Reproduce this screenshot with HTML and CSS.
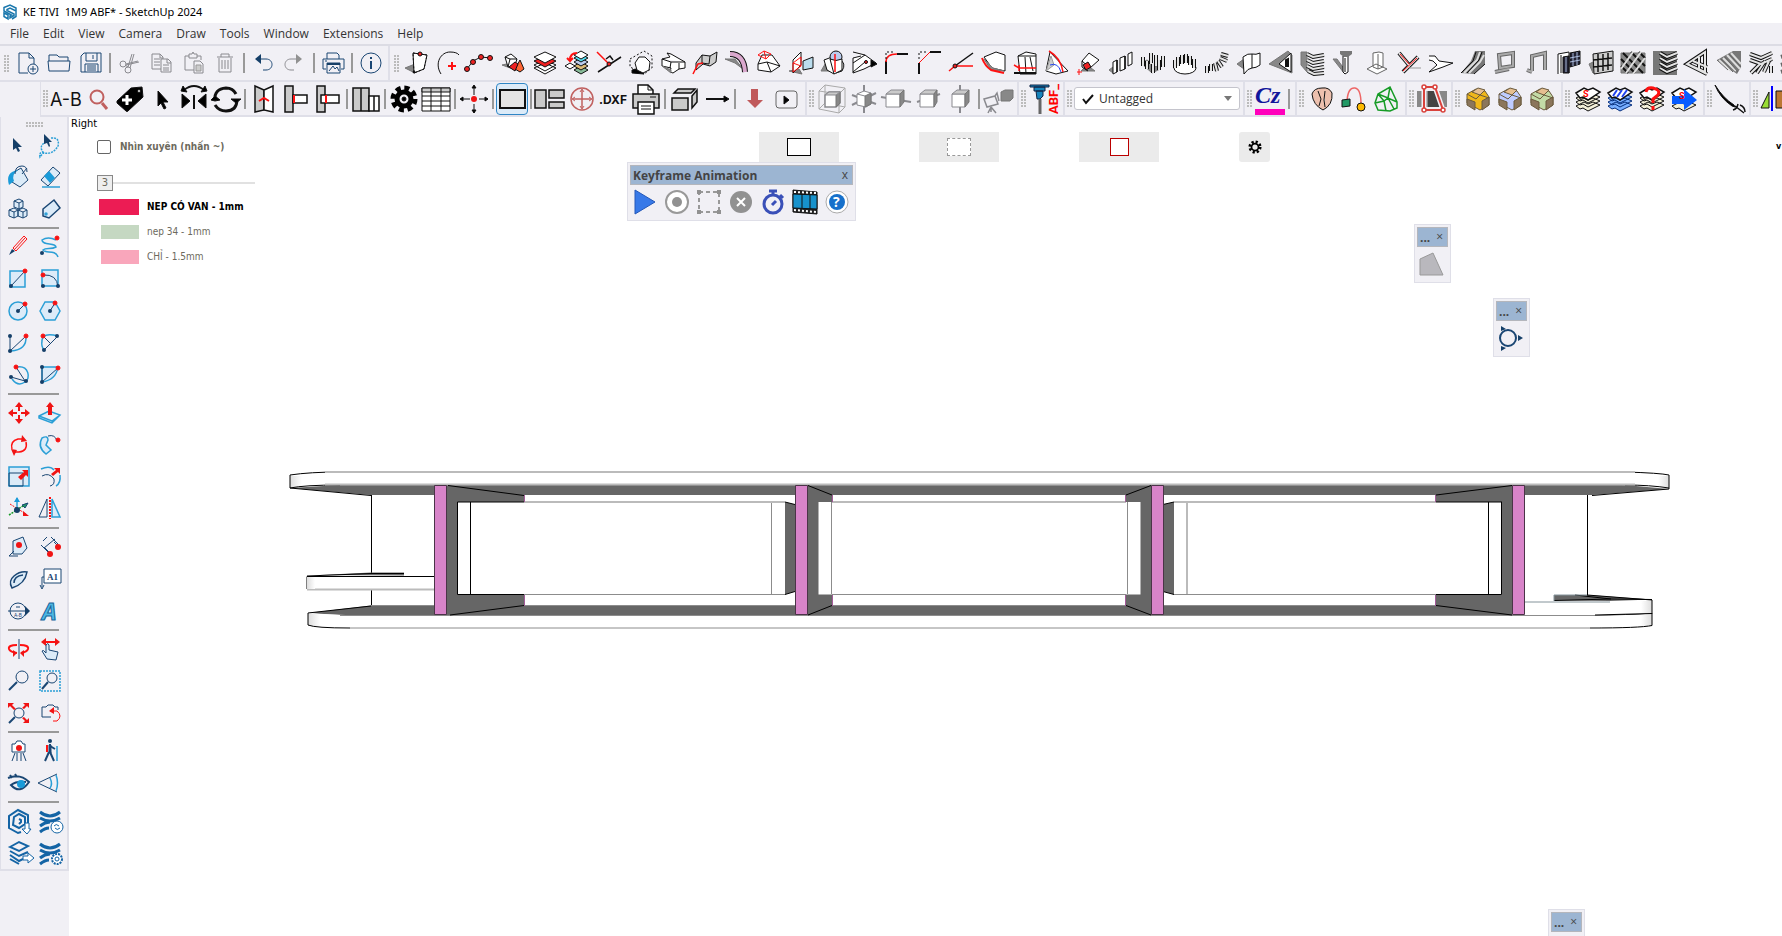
FILE: index.html
```html
<!DOCTYPE html>
<html lang="vi">
<head>
<meta charset="utf-8">
<title>KE TIVI 1M9 ABF* - SketchUp 2024</title>
<link rel="stylesheet" href="styles.css">
</head>
<body>
<header class="titlebar">
<svg class="logo" viewBox="0 0 16 16"><path d="M2 3.500 8 1l6 3v3L8 4 5 5.500v1L12 10v1.500L8 14v-2l1.500-1L2 7zM2 9l4 2v4l-4-2.500zM10 15l4-2.500V5"/></svg>
<h1>KE TIVI&nbsp; 1M9 ABF* - SketchUp 2024</h1>
</header>
<nav class="menu">
<button>File</button><button>Edit</button><button>View</button><button>Camera</button><button>Draw</button><button>Tools</button><button>Window</button><button>Extensions</button><button>Help</button>
</nav>

<div class="bar first">
<div class="group navy">
<i class="grip"></i>
<button aria-label="New"><svg viewBox="0 0 32 32"><path d="M17 26H8V6h10l5 5v6M18 6v5h5"/><circle cx="22" cy="22" r="5"/><path d="M22 19v6M19 22h6"/></svg></button>
<button aria-label="Open"><svg viewBox="0 0 32 32"><path d="M6 14V8h8l2 2h9v4M5 14h22l-1 10H6z"/></svg></button>
<button aria-label="Save"><svg viewBox="0 0 32 32"><path d="M6 9l3-3h17v19H6zM11 6v8h11V6M18 8v4M10 25v-8h13v8M12 19h9M12 21h9M12 23h9"/></svg></button>
<i class="sep"></i>
<button aria-label="Cut"><svg class="gray" viewBox="0 0 32 32"><circle cx="10" cy="17" r="3"/><circle cx="15" cy="23" r="3"/><path d="M13 17l12-3M26 15l-13 3M15 20l4-13M21 7l-4 14M12 18l3 2"/></svg></button>
<button aria-label="Copy"><svg class="gray" viewBox="0 0 32 32"><path d="M16 22H7V7h8l3 3v2M15 7v4h3M9 12h6M9 15h6M9 18h6M16 12h7l3 3v10H16zM22 12v4h4M18 18h6M18 21h6M18 23h6"/></svg></button>
<button aria-label="Paste"><svg class="gray" viewBox="0 0 32 32"><path d="M17 23H8V9h4M20 9h4v4M12 7h3l1-2 1 2h3v4h-8zM17 14h6l3 3v9h-9z"/><path class="f-lg" d="M19 18h5v6h-5z"/></svg></button>
<button aria-label="Delete"><svg class="gray" viewBox="0 0 32 32"><path d="M8 10h16M12 10V7h8v3M10 11v14h12V11M13 13v9M16 13v9M19 13v9"/></svg></button>
<i class="sep"></i>
<button aria-label="Undo"><svg viewBox="0 0 32 32"><path d="M10 12h9c8 0 8 11 0 11h-3"/><path class="f-navy" d="M8 12l6-5v10z"/></svg></button>
<button aria-label="Redo"><svg class="gray" viewBox="0 0 32 32"><path d="M21 12h-9c-8 0-8 11 0 11h3"/><path class="f-gray" d="M23 12l-6-5v10z"/></svg></button>
<i class="sep"></i>
<button aria-label="Print"><svg viewBox="0 0 32 32"><path d="M10 12V6h10l2 2v4M9 22H6V12h21v10h-3M10 16v10h13V16zM8 14h2M12 24l4-5 2 3 2-2 2 4"/><path class="f-navy" d="M10 16h13v2H10z"/></svg></button>
<i class="sep"></i>
<button aria-label="Model info"><svg viewBox="0 0 32 32"><circle cx="16" cy="16" r="10"/><path class="w2" d="M16 14v8M16 10v2"/></svg></button>
</div>
<div class="group small">
<i class="grip"></i>
<button aria-label="Extrude"><svg viewBox="0 0 24 24"><path class="f-g" d="M0 17l10-4v9z"/><path class="f-w" d="M8 2l14 2-3 14-10 4z"/><path class="dash" d="M8 2l14 2-3 14-10 4z"/><circle class="f-r" cx="15" cy="3" r="2"/><circle class="f-k" cx="9" cy="21" r="1"/></svg></button>
<button aria-label="Arc point"><svg viewBox="0 0 24 24"><path d="M4 23C-3 12 4 1 13 1q7 0 9 3"/><path class="r w2" d="M15 11v8M11 15h8"/></svg></button>
<button aria-label="Polyline"><svg viewBox="0 0 24 24"><path d="M-2 18l6-8 8-4 10 1"/><circle class="f-r" cx="-2" cy="18" r="2.500"/><circle class="f-r" cx="4" cy="11" r="2.500"/><circle class="f-r" cx="12" cy="6" r="2.500"/><circle class="f-r" cx="21" cy="7" r="2.500"/></svg></button>
<button aria-label="Solid"><svg viewBox="0 0 24 24"><path class="f-g" d="M1 14l9-2 2 6z"/><path class="f-w" d="M4 6l6-3 6 5-2 6-7 2zM4 6l5 2 7 0M9 8l-2 8"/><path class="f-o" d="M14 18l5-9 4 9-4 3z"/><path class="f-r" d="M8 16l6-5 3 2-3 7z"/></svg></button>
<button aria-label="Layers"><svg viewBox="0 0 24 24"><path class="f-w" d="M1 17l11-5 11 5-11 6zM1 14l11-5 11 5-11 6z"/><path class="f-r" d="M1 10l11-5 11 5-11 6z"/><path class="f-w" d="M1 6l11-5 11 5-11 6z"/></svg></button>
<button aria-label="Swap layers"><svg viewBox="0 0 24 24"><path class="f-gr" d="M9 19l7-4 7 4-7 4z"/><path class="f-y" d="M9 15l7-4 7 4-7 4z"/><path class="f-p" d="M9 11l7-4 7 4-7 4z"/><path class="f-c" d="M9 7l7-4 7 4-7 4z"/><path class="f-w" d="M9 4l7-4 7 4-7 4zM0 15l5-3 5 3-5 3z"/><path class="r w2" d="M12 2Q5 2 5 9M2 7l3 3 3-3"/></svg></button>
<button aria-label="Intersect"><svg viewBox="0 0 24 24"><path class="w15" d="M1 21L24 6M9 8l4-3 3 4"/><path class="r w15" d="M0 1l12 12"/><circle class="f-r" cx="12" cy="13" r="2"/></svg></button>
<button aria-label="Hull"><svg viewBox="0 0 24 24"><path class="f-k" d="M3 19l8-2 4 6-12-1z"/><path class="dash" d="M1 8L15 0l8 5v12l-8 6L1 16z"/><path class="f-w" d="M6 12l4-6h6l5 5-1 8-6 3-6-3z"/></svg></button>
<button aria-label="Push face"><svg viewBox="0 0 24 24"><path class="f-w" d="M1 8l8-2-3-4 4 1 14 8v6l-6 1-6 4-3-1 1-4-9-2zM1 8l9 3 14 0M10 11l-1 6M18 12v6"/><path class="f-g" d="M1 15l9 4v3z"/></svg></button>
<button aria-label="Warp"><svg viewBox="0 0 24 24"><path class="f-lg k" d="M3 12l6-8 8 1 7-4-1 10-6 4-7-2-7 6z"/><path d="M9 4v8l7 1 1-8"/><path class="r w15" d="M0 23l5-10 5-1"/></svg></button>
<button aria-label="Pipe"><svg viewBox="0 0 24 24"><path class="f-g" d="M0 8h10l8 10-8-6z"/><path class="pipe k" d="M5 3q14 0 15 18"/><path class="pipe p2" d="M5 3q14 0 15 18"/></svg></button>
<button aria-label="Dome"><svg viewBox="0 0 24 24"><path class="f-w" d="M1 13l4-9h10l8 11-9 6-13-2zM1 13l9-2 13 4M10 11l4 10"/><path class="r" d="M1 4l6-4 7 3-5 5zM7 0l2 8"/></svg></button>
<button aria-label="Section"><svg viewBox="0 0 24 24"><path class="f-g" d="M0 20l10-2 3 5z"/><path class="f-w" d="M4 9l8-8v13l-8 8z"/><path class="f-cl" d="M14 10l10-4v11l-10 2z"/><path class="r" d="M4 12l8-6v9l-8 6zM4 12l8 3"/></svg></button>
<button aria-label="Lens"><svg viewBox="0 0 24 24"><path class="f-g" d="M0 20L7 8l6 12z"/><path class="f-w" d="M3 9l8-3 6 9-4 8-7-4zM18 8q8 4 3 12l-6 2"/><circle class="f-p" cx="15" cy="6" r="6"/><path class="f-w" d="M9 8q6 3 12 0v11l-8 4z"/><path class="r w15" d="M14 3v18"/></svg></button>
<button aria-label="Cone"><svg viewBox="0 0 24 24"><path class="f-w" d="M0 1l12 3 11 8-12 6-11 4V7l8-2"/><path d="M0 12l12-8M0 21l12-10"/><path class="f-k" d="M18 9l6 4-6 3z"/><circle class="f-r" cx="13" cy="11" r="1.500"/></svg></button>
<button aria-label="Fillet"><svg viewBox="0 0 24 24"><path class="w2" d="M1 23V10M12 3h11"/><path class="r w15" d="M1 11q0-8 11-8"/><path class="dash" d="M1 8V1h8"/></svg></button>
<button aria-label="Chamfer"><svg viewBox="0 0 24 24"><path class="w2" d="M2 23V12M13 1h11"/><path class="r" d="M2 12L13 1"/><path class="dash" d="M2 8V1h7"/></svg></button>
<button aria-label="Angle"><svg viewBox="0 0 24 24"><path class="w15" d="M6 15L24 2"/><path class="r w15" d="M0 20l6-5 18 0"/><circle class="f-r" cx="6" cy="15" r="2"/></svg></button>
<button aria-label="Sweep"><svg viewBox="0 0 24 24"><path class="f-w" d="M3 6l12-5 9 3v16l-13-3z"/><path class="f-g" d="M3 8l9 9 11 3-13-1z"/><path class="r w2" d="M1 7q3 8 9 12l13 3"/></svg></button>
<button aria-label="Box wrap"><svg viewBox="0 0 24 24"><path class="f-w" d="M5 5l8-4 10 2v20H7zM5 5h18M12 6l1 17M17 6l3 14"/><path class="r w15" d="M1 14l5 3h17M6 14v6"/><path class="k w2" d="M1 22h22"/></svg></button>
<button aria-label="Fold"><svg viewBox="0 0 24 24"><path class="f-w" d="M1 20L5 1l18 19-12 3z"/><path class="f-lg" d="M1 20L6 5l3 9z"/><path class="r w15" d="M4 0q12 7 14 21"/><path class="b" d="M5 14q8-3 11 7"/></svg></button>
<button aria-label="Place"><svg viewBox="0 0 24 24"><path class="f-g" d="M4 20h14l-8-6z"/><path class="f-w" d="M5 10l7-8 10 7-9 8z"/><path d="M5 10v6l6 4"/><path class="f-r" d="M6 14l5-3 3 5-5 3z"/><path class="r" d="M2 18v6M0 21h5"/></svg></button>
<button aria-label="Array along"><svg viewBox="0 0 24 24"><path class="f-g" d="M0 19l4-3v6z"/><path class="f-w" d="M4 11l4-2v12l-4 2zM11 7l5-2v13l-5 2zM19 3l4-2v12l-4 2z"/><path class="k w15" d="M8 9v12M16 5v13"/></svg></button>
<button aria-label="Array grid"><svg viewBox="0 0 24 24"><path class="f-g" d="M0 12l6-3 13 9-8 4z"/><path class="posts" d="M2 6v9M6 10v8M10 2v11M12 12v10M15 4v11M18 9v10M22 5v11"/><path class="posts in" d="M2 6v9M6 10v8M10 2v11M12 12v10M15 4v11M18 9v10M22 5v11"/></svg></button>
<button aria-label="Array polar"><svg viewBox="0 0 24 24"><ellipse class="f-w" cx="12" cy="17" rx="11" ry="6"/><path class="posts" d="M2 9v8M5 6v9M9 4v9M13 3v9M17 5v9M21 8v9"/><path class="posts in" d="M2 9v8M5 6v9M9 4v9M13 3v9M17 5v9M21 8v9"/></svg></button>
<button aria-label="Array curve"><svg viewBox="0 0 24 24"><path class="posts" d="M2 15v7M6 13v7M10 12l2 8M13 10l4 6M15 7l7 3M16 3l7 2"/><path class="posts in" d="M2 15v7M6 13v7M10 12l2 8M13 10l4 6M15 7l7 3M16 3l7 2"/></svg></button>
<button aria-label="Curved panel"><svg viewBox="0 0 24 24"><path class="f-g" d="M0 13l7-5v10z"/><path class="f-w" d="M6 6q5-4 9-3t8-1v12q-4 3-8 3t-8 6zM15 3v14"/></svg></button>
<button aria-label="Slot panel"><svg viewBox="0 0 24 24"><path class="f-g" d="M0 13L19 0l4 4v18z"/><path class="f-w" d="M10 13L22 2v19z"/><path class="k w2" d="M17 9v6h2V8z"/></svg></button>
<button aria-label="Shelves"><svg viewBox="0 0 24 24"><path class="f-g" d="M0 1h6v20L0 14z"/><path class="louv" d="M6 3l6 3 11-2M6 9l6 3 11-2M6 15l6 3 11-2M7 20l6 3 10-1"/><path class="louv in" d="M6 3l6 3 11-2M6 9l6 3 11-2M6 15l6 3 11-2M7 20l6 3 10-1"/></svg></button>
<button aria-label="Bolt"><svg viewBox="0 0 24 24"><path class="f-g" d="M0 8l4 0 8 11-1 3z"/><path class="f-w" d="M10 5h5v16l-3 2-2-2zM12 7v14"/><path class="f-dg" d="M7 0h12v3l-4 3h-4L7 3z"/></svg></button>
<button aria-label="Base"><svg viewBox="0 0 24 24" class="mid"><path class="f-w" d="M2 18l9-5 11 5-10 5zM8 2l6-1 4 1v14l-5 2-5-2zM13 3v15"/></svg></button>
<button aria-label="Joint"><svg viewBox="0 0 24 24"><path class="posts" d="M2 2l10 12M21 6L6 21"/><path class="posts in" d="M2 2l10 12M21 6L6 21"/><path class="r" d="M3 3l9 10M20 7L6 20"/><path class="gr1" d="M12 17h12"/></svg></button>
<button aria-label="Scarf"><svg viewBox="0 0 24 24"><path class="f-w" d="M0 5h6l4 5 14 2-10 4-14 5 8-7-4-4-4-1"/></svg></button>
<button aria-label="Rail"><svg viewBox="0 0 24 24"><path class="f-dg" d="M0 22L10 10 14 0h10v13L13 23z"/><path class="lt" d="M3 22L16 9l3-8M8 22l11-11 4-7"/><path class="k" d="M0 22L12 10l3-9M6 22L18 9l3-8M13 23l11-10"/></svg></button>
<button aria-label="Frame"><svg viewBox="0 0 24 24"><path class="gw" d="M6 4l14-2v13L7 17zM2 21l14-3"/><path class="gw in" d="M6 4l14-2v13L7 17zM2 21l14-3"/></svg></button>
<button aria-label="Arch"><svg viewBox="0 0 24 24"><path class="gw" d="M7 20V5l13-3v17M2 19l5 2"/><path class="gw in" d="M7 20V5l13-3v17M2 19l5 2"/></svg></button>
<button aria-label="Window wall"><svg viewBox="0 0 24 24"><path class="f-w" d="M1 23V3l11-2v21"/><path d="M4 4v18"/><path class="f-n" d="M6 6l6-1v17H6zM13 2l10-2v13l-10 3z"/><path class="lt1" d="M16 2v13M20 1v13M13 7l10-2M13 11l10-2M9 6v15"/></svg></button>
<button aria-label="Grid"><svg viewBox="0 0 24 24"><path class="f-g" d="M0 13l4-2v11z"/><path class="f-lg k" d="M4 3l20-3v20L5 23z"/><path class="k w15" d="M9 3v18M14 3v17M19 2v17M4 9l19-2M4 16l19-2"/></svg></button>
<button aria-label="Mesh"><svg viewBox="0 0 24 24"><path class="f-g" d="M0 2h24v20H0z"/><path class="k w2" d="M0 8l14 14M2 2l20 20M10 1l14 14M0 15l7 7M18 1l6 6"/><path class="lt" d="M0 18L12 1M5 22L20 1M12 23L24 7"/></svg></button>
<button aria-label="Louvers"><svg viewBox="0 0 24 24"><path class="f-dg" d="M0 0h24v24H0z"/><path class="louv" d="M7 2l7 4 10-4M7 7l7 4 10-4M7 12l7 4 10-4M7 17l7 4 10-4"/><path class="louv in" d="M7 2l7 4 10-4M7 7l7 4 10-4M7 12l7 4 10-4M7 17l7 4 10-4"/></svg></button>
<button aria-label="Truss"><svg viewBox="0 0 24 24"><path class="posts" d="M2 13L20 1v20zM8 10l14 6M14 6v12M2 13l20 10"/><path class="posts in" d="M2 13L20 1v20zM8 10l14 6M14 6v12M2 13l20 10"/></svg></button>
<button aria-label="Corrugated"><svg viewBox="0 0 24 24"><path class="f-dg" d="M0 9L16 0h8v16l-4 7z"/><path class="lt" d="M2 9l12 11M6 7l13 13M10 4l13 14M14 2l10 11"/><path class="mid" d="M0 9l11 10M4 8l12 13M8 6l13 15M12 3l12 13"/></svg></button>
<button aria-label="Herringbone"><svg viewBox="0 0 24 24"><path class="posts" d="M1 3l11 4L23 2M1 9l11 4L23 8M2 22l9-9M8 22l8-12M15 21l5-11M22 15v7"/><path class="posts in" d="M1 3l11 4L23 2M1 9l11 4L23 8M2 22l9-9M8 22l8-12M15 21l5-11M22 15v7"/></svg></button>
<button aria-label="More"><svg viewBox="0 0 24 24"><path class="gw" d="M0 6l12-4M0 14l12-4M0 21l12-4"/></svg></button>
</div>
</div>

<div class="bar second">
<div class="group">
<i class="grip"></i>
<button aria-label="A to B"><svg viewBox="0 0 32 32"><text class="ab" x="0" y="23">A-B</text></svg></button>
<button aria-label="Search"><svg viewBox="0 0 32 32"><path class="rose" d="M20 20l5 6"/><circle class="rose t" cx="15" cy="14" r="6.500"/></svg></button>
<button aria-label="Add tag"><svg viewBox="0 0 32 32"><path class="f-k" d="M3 18L17 5l11-1 1 10-15 14q-1 1-2 0l-9-8z"/><circle class="f-w" cx="25" cy="8" r="1.500"/><path class="wl" d="M13 12v10M8 17h10"/></svg></button>
<button aria-label="Select"><svg viewBox="0 0 32 32"><path class="f-k" d="M12 8v15l3-3 3 6 2-1-3-6h5z"/></svg></button>
<button aria-label="Mirror"><svg viewBox="0 0 32 32"><path class="w2" d="M6 7q10-8 20 0M16 12v14"/><path class="f-k" d="M3 8l6 1-4-6zM29 8l-6 1 4-6zM4 11v14l8-7zM28 11v14l-8-7z"/></svg></button>
<button aria-label="Rotate"><svg viewBox="0 0 32 32"><path class="w3" d="M5 17Q4 6 16 5q7 0 10 6M27 16q0 12-11 12-7 0-11-6"/><path class="f-k" d="M1 17l4-4 5 4-5 1zM21 16l5 4 5-4z"/></svg></button>
<i class="sep"></i>
<button aria-label="Book fold"><svg viewBox="0 0 32 32"><path class="f-l w15" d="M7 3l9 4v20l-9 2z"/><path class="f-w w15" d="M25 3l-9 4v20l9 2z"/><path class="r w2" d="M11 18l5-3 5 3"/></svg></button>
<button aria-label="Join tee"><svg viewBox="0 0 32 32"><path class="f-l w15" d="M5 3h8v26H5z"/><path class="f-w w15" d="M13 12h14v8H13z"/><path class="r w2" d="M14 12v8"/></svg></button>
<button aria-label="Dado"><svg viewBox="0 0 32 32"><path class="f-l w15" d="M5 3h8v26H5z"/><path class="f-w w15" d="M9 12h18v8H9z"/><path class="r w2" d="M14 12v8"/></svg></button>
<i class="sep"></i>
<button aria-label="Panels"><svg viewBox="0 0 32 32"><path class="f-l w15" d="M3 5h8v23H3zM11 5h8v23h-8z"/><path class="f-w w15" d="M19 13h5v15h-5zM24 13h5v15h-5z"/></svg></button>
<i class="sep"></i>
<button aria-label="Settings"><svg viewBox="0 0 32 32"><circle class="teeth" cx="16" cy="16" r="11"/><circle class="ring" cx="16" cy="16" r="7"/><circle class="f-k" cx="16" cy="16" r="2"/></svg></button>
<button aria-label="Table"><svg viewBox="0 0 32 32"><path class="f-w" d="M2 5h28v23H2z"/><path class="f-l" d="M2 5h28v4H2z"/><path d="M2 13h28M2 18h28M2 23h28M11 5v23M21 5v23"/></svg></button>
<i class="sep"></i>
<button aria-label="Move all"><svg viewBox="0 0 32 32"><path d="M16 3v9M16 21v9M3 16h9M21 16h9"/><circle class="f-r nos" cx="16" cy="16" r="3"/><path class="f-k" d="M14 5l2-3 2 3zM14 27l2 3 2-3zM5 14l-3 2 3 2zM27 14l3 2-3 2z"/></svg></button>
<i class="sep"></i>
<button class="on" aria-label="Rectangle"><svg viewBox="0 0 32 32"><path class="f-ll w2" d="M4 7h25v18H4z"/></svg></button>
<i class="sep"></i>
<button aria-label="Layout"><svg viewBox="0 0 32 32"><path class="f-l w15" d="M1 7h11v18H1zM15 7h15v8H15zM15 19h15v6H15z"/></svg></button>
<button aria-label="Center"><svg viewBox="0 0 32 32" class="rosy"><circle class="w15" cx="16" cy="16" r="11"/><path class="w15" d="M16 7v18M7 16h18"/><path d="M14 9l2-3 2 3M14 23l2 3 2-3M9 14l-3 2 3 2M23 14l3 2-3 2"/></svg></button>
<button aria-label="Export DXF"><svg viewBox="0 0 32 32"><text class="dxf" x="1" y="21">.DXF</text></svg></button>
<button aria-label="Print sheet"><svg viewBox="0 0 32 32"><path class="f-w w15" d="M8 11V2h10l5 5v4"/><path class="f-l w15" d="M3 11h26v14H3z"/><path class="f-w w15" d="M8 19h16v12H8z"/><path d="M11 23h10M11 26h10M18 2v5h5M20 14h6"/></svg></button>
<i class="sep"></i>
<button aria-label="Exploded box"><svg viewBox="0 0 32 32"><path class="f-l w15" d="M4 15h16v12H4zM10 6h17l-4 4H6zM24 13l5-6v12l-5 6z"/></svg></button>
<button aria-label="Direction"><svg viewBox="0 0 32 32"><path class="w2" d="M6 16h20"/><path class="f-k" d="M24 13l5 3-5 3z"/></svg></button>
<i class="sep"></i>
<button aria-label="Download"><svg viewBox="0 0 32 32"><path class="f-rose" d="M13 6h7v11h5l-8 8-8-8h4z"/></svg></button>
<button aria-label="Play"><svg viewBox="0 0 32 32"><rect x="6" y="8" width="21" height="17" rx="3" class="mid"/><path class="f-k" d="M14 13v8l5-4z"/></svg></button>
</div>
<div class="group gray">
<i class="grip"></i>
<button aria-label="Iso view"><svg viewBox="0 0 32 32"><path class="lg" d="M3 8l6-6 20 3v19l-6 6-20-4zM3 8l20 3 6-6M23 11v19M9 2v18l20 4M9 20l-6 6"/><path class="f-w w15" d="M9 12l4-3h11v11l-4 4H9z"/><path class="f-g" d="M20 12l4-3v11l-4 4z"/><path class="f-l" d="M9 12l4-3h11l-4 3z"/></svg></button>
<button aria-label="Top view"><svg viewBox="0 0 32 32"><path class="w2" d="M16 2v28M4 12l24 9M28 10L4 22"/><path class="f-w" d="M9 11l7-3 7 2v11l-5 3-9-2z"/><path class="f-g" d="M17 13l6-3v11l-6 3z"/><path d="M9 11l8 2"/></svg></button>
<button aria-label="Front view"><svg viewBox="0 0 32 32"><path class="w2" d="M1 14l30 5"/><path class="f-w" d="M6 11h14v13H6z"/><path class="f-l" d="M6 11l5-4h13l-4 4z"/><path class="f-g" d="M20 11l4-4v12l-4 5z"/></svg></button>
<button aria-label="Right view"><svg viewBox="0 0 32 32"><path class="w2" d="M5 19l23-8"/><path class="f-w" d="M8 11h14v13H8z"/><path class="f-l" d="M8 11l5-4h12l-3 4z"/><path class="f-g" d="M22 11l3-4v12l-3 5z"/></svg></button>
<button aria-label="Back view"><svg viewBox="0 0 32 32"><path class="w2" d="M16 2v28"/><path class="f-w" d="M8 11h13v13H8z"/><path class="f-l" d="M8 11l5-4h12l-4 4z"/><path class="f-g" d="M21 11l4-4v12l-4 5z"/></svg></button>
<i class="sep"></i>
<button aria-label="Camera view"><svg viewBox="0 0 32 32"><path class="f-g" d="M19 9l4-2h8v8l-3 3h-9z"/><path class="w15" d="M2 16l11-3 3 8-11 3zM13 13l2-3 2 8M9 24l-3 6M9 24l5 6M9 24v5"/></svg></button>
</div>
<div class="group">
<i class="grip"></i>
<button aria-label="ABF"><svg viewBox="0 0 32 32"><path class="f-bl" d="M2 2h19v2H2zM6 4h11v4H6zM8 8h7v5l-3 3H9z"/><path class="w3 mid" d="M12 16v15"/><text class="abf" transform="translate(30 31) rotate(-90)">ABF_</text></svg></button>
</div>
<div class="group">
<i class="grip"></i>
<div class="tag"><svg class="tick" viewBox="0 0 14 12"><path d="M2 6l3 4 7-8"/></svg><select aria-label="Tag"><option>Untagged</option></select></div>
</div>
<div class="group">
<i class="grip"></i>
<button aria-label="Curviz"><svg viewBox="0 0 32 32"><text class="cz" x="1" y="20">Cz</text><path class="f-m" d="M1 26h30v6H1z"/></svg></button>
<i class="sep"></i>
</div>
<div class="group">
<i class="grip"></i>
<button aria-label="Shell"><svg viewBox="0 0 32 32"><path class="f-skin" d="M6 11q2-6 10-6 7-1 10 5 1 12-9 17Q7 22 6 11zM12 8l3 8-2 7M19 8l-1 9 1 7"/></svg></button>
<button aria-label="Path link"><svg viewBox="0 0 32 32"><path class="salmon" d="M9 18Q10 4 17 5q6 1 6 16"/><path class="f-grn" d="M4 17l8-1v7l-8 1z"/><circle class="f-yel" cx="23" cy="24" r="4"/></svg></button>
<button aria-label="Green hull"><svg viewBox="0 0 32 32" class="green"><path d="M20 4l7 15v6l-7 3-12-1-3-7 3-9zM8 11l10 4 2-11M5 20l9-2 4-3 9 4M14 18l2 10M18 15l6 11M8 11l6 7"/></svg></button>
</div>
<div class="group">
<i class="grip"></i>
<button aria-label="Profile"><svg viewBox="0 0 32 32"><path class="f-g nos" d="M1 8h30v16H1z"/><path class="f-d" d="M12 8h8l4 16H12z"/><path class="gap" d="M8 4h11l8 23H8z"/><path class="redl" d="M8 4h11l8 23H8z"/><circle class="redc" cx="8" cy="4" r="2"/><circle class="redc" cx="19" cy="4" r="2"/><circle class="redc" cx="27" cy="27" r="2"/><circle class="redc" cx="8" cy="27" r="2"/></svg></button>
</div>
<div class="group solids">
<i class="grip"></i>
<button aria-label="Round corner"><svg viewBox="0 0 32 32"><path class="f-gold" d="M5 11l9-5 9 2 4 6v8l-9 5-13-7z"/><path class="f-tan" d="M10 9l6-4 7 2-5 5z"/><path class="f-br" d="M5 16l8 3v8l-8-5zM20 18l7-4v8l-7 5z"/><path d="M5 11l9 5 4-4 9 3"/></svg></button>
<button aria-label="Sharp corner"><svg viewBox="0 0 32 32"><path class="f-lav" d="M5 11l9-5 9 2 4 6v8l-9 5-13-7z"/><path class="f-tan" d="M10 9l6-4 7 2-5 5z"/><path class="f-br" d="M5 16l8 3v8l-8-5zM20 18l7-4v8l-7 5z"/><path d="M5 11l9 5 4-4 9 3"/></svg></button>
<button aria-label="Bevel"><svg viewBox="0 0 32 32"><path class="f-sage" d="M5 11l9-5 9 2 4 6v8l-9 5-13-7z"/><path class="f-tan" d="M10 9l6-4 7 2-5 5z"/><path class="f-br" d="M5 16l8 3v8l-8-5zM20 18l7-4v8l-7 5z"/><path d="M5 11l9 5 4-4 9 3"/></svg></button>
</div>
<div class="group">
<i class="grip"></i>
<button aria-label="Sheet S"><svg viewBox="0 0 32 32"><path class="f-cr" d="M4 23l8-4 4 2 5-2 7 3-12 6-5-3-3 1zM4 19l8-4 4 2 5-2 7 3-12 6-5-3-3 1zM4 15l8-4 4 2 5-2 7 3-12 6-5-3-3 1z"/><path class="f-w w15" d="M4 10l8-5 4 2 5-2 7 4-12 8-5-3-3 1z"/><text class="s" x="11" y="14">S</text></svg></button>
<button aria-label="Sheet lines"><svg viewBox="0 0 32 32"><path class="f-blue" d="M4 23l8-4 4 2 5-2 7 3-12 6-5-3-3 1zM4 19l8-4 4 2 5-2 7 3-12 6-5-3-3 1zM4 15l8-4 4 2 5-2 7 3-12 6-5-3-3 1z"/><path class="f-w w15" d="M4 10l8-5 4 2 5-2 7 4-12 8-5-3-3 1z"/><path class="b w2" d="M9 13l4-6M13 14l5-7M18 14l5-7"/></svg></button>
<button aria-label="Sheet help"><svg viewBox="0 0 32 32"><path class="f-cr" d="M4 23l8-4 4 2 5-2 7 3-12 6-5-3-3 1zM4 19l8-4 4 2 5-2 7 3-12 6-5-3-3 1zM4 15l8-4 4 2 5-2 7 3-12 6-5-3-3 1z"/><path class="f-w w15" d="M4 10l8-5 4 2 5-2 7 4-12 8-5-3-3 1z"/><path class="r big" d="M10 9q1-5 7-4 8 2 5 7l-5 4v4M17 23v4"/></svg></button>
<button aria-label="Sheet export"><svg viewBox="0 0 32 32"><path class="f-cr" d="M4 23l8-4 4 2 5-2 7 3-12 6-5-3-3 1z"/><path class="f-w w15" d="M4 10l8-5 4 2 5-2 7 4-12 8-5-3-3 1z"/><path class="f-blue2" d="M4 13h12V6l13 11-13 10v-6H4z"/><text class="s" x="11" y="16">S</text></svg></button>
</div>
<div class="group">
<i class="grip"></i>
<button aria-label="Cut blade"><svg viewBox="0 0 32 32"><path class="f-k" d="M1 2q8 13 19 20l1 2-3-1Q6 15 1 2z"/><path class="w15" d="M19 27q4-1 5-6M21 23l9 7M26 22q5 2 5 7"/></svg></button>
</div>
<div class="group">
<i class="grip"></i>
<button aria-label="Flip"><svg viewBox="0 0 32 32"><path class="f-lime" d="M1 25L9 9v16z"/><path class="b2" d="M12 3v25"/><path class="f-org" d="M16 8h8v17h-8z"/></svg></button>
</div>
</div>

<main class="work">
<aside class="palette">
<i class="hgrip"></i>
<div class="tools">
<button aria-label="Select"><svg viewBox="0 0 32 32"><path class="f-navy" d="M12 9v12l3-2 2 4 2-1-2-4h4z"/></svg></button>
<button aria-label="Lasso"><svg viewBox="0 0 32 32"><path class="sky d" d="M18 9q9-1 7 8-5 9-15 7l-3 4q-1-5 3-5-4-5 1-9"/><path class="f-navy" d="M11 5v10l3-1 2 4 1-1-1-4h3z"/></svg></button>
<button aria-label="Paint"><svg viewBox="0 0 32 32"><path class="f-pale" d="M10 13l10-6 7 12-8 7-8-5z"/><path class="f-sky" d="M8 24q-4-13 9-15-7 5-4 11z"/><path d="M14 13q0-8 7-8 5 0 5 6M21 13l5-6"/></svg></button>
<button aria-label="Eraser"><svg viewBox="0 0 32 32"><path class="f-pale" d="M8 19L20 6l7 6-12 13z"/><path class="f-sky" d="M11 15l5-5 6 7-5 5z"/><path class="sky w2" d="M9 26h18"/></svg></button>
<button aria-label="Components"><svg viewBox="0 0 32 32"><path class="f-pale" d="M13 8l5-2 4 2v6l-4 2-5-2zM8 17l5-2 4 2v6l-4 2-5-2zM17 17l5-2 4 2v6l-4 2-5-2zM13 8l5 2 4-2M18 10v6M8 17l5 2 4-2 5 2 4-2M13 19v6M22 19v6"/></svg></button>
<button aria-label="Tag"><svg viewBox="0 0 32 32"><path class="f-pale w15" d="M10 16L21 7l6 8-11 10-6-2z"/><circle class="sky" cx="13" cy="21" r="1"/></svg></button>
<i></i>
<button aria-label="Pencil"><svg viewBox="0 0 32 32"><path class="r" d="M12 17L23 5l3 3-11 12zM13 19L24 7"/><path class="f-navy" d="M8 24l3-6 3 2z"/></svg></button>
<button aria-label="Freehand"><svg viewBox="0 0 32 32"><path class="sky" d="M23 9q-8-4-14 0c0 6 14 2 14 7-5 3-10 0-13 3 3 4 12-1 15 7"/><circle class="f-r dot" cx="24" cy="7" r="2"/><circle class="f-navy" cx="9" cy="22" r="2"/></svg></button>
<button aria-label="Rectangle"><svg viewBox="0 0 32 32"><path class="f-pale sky" d="M9 8h15v16H9z"/><path d="M10 23L24 8"/><circle class="f-r dot" cx="24" cy="8" r="2"/><circle class="f-navy" cx="10" cy="23" r="2"/></svg></button>
<button aria-label="Rotated rectangle"><svg viewBox="0 0 32 32"><path class="f-pale sky" d="M9 7h16v16H9z"/><path d="M10 12q14-1 15 12"/><circle class="f-r dot" cx="10" cy="12" r="2"/><circle class="f-navy" cx="10" cy="23" r="2"/><circle class="f-navy" cx="25" cy="23" r="2"/></svg></button>
<button aria-label="Circle"><svg viewBox="0 0 32 32"><circle class="f-pale sky" cx="17" cy="16" r="9"/><path d="M17 16l7-7"/><circle class="f-r dot" cx="24" cy="9" r="2"/><circle class="f-navy" cx="17" cy="16" r="2"/></svg></button>
<button aria-label="Polygon"><svg viewBox="0 0 32 32"><path class="f-pale sky" d="M7 16l5-9h10l5 9-5 9H12z"/><path d="M17 16l5-8"/><circle class="f-r dot" cx="22" cy="8" r="2"/><circle class="f-navy" cx="17" cy="16" r="2"/></svg></button>
<button aria-label="Arc"><svg viewBox="0 0 32 32"><path class="sky" d="M25 9q1 14-15 15"/><path d="M9 9v15L25 9"/><circle class="f-r dot" cx="25" cy="9" r="2"/><circle class="f-navy" cx="9" cy="9" r="2"/><circle class="f-navy" cx="9" cy="24" r="2"/></svg></button>
<button aria-label="Two point arc"><svg viewBox="0 0 32 32"><path class="sky" d="M25 9Q9 5 9 14q-1 5 2 9"/><path d="M10 9l8 8M11 23L25 9"/><circle class="f-r dot" cx="10" cy="9" r="2"/><circle class="f-navy" cx="24" cy="9" r="2"/><circle class="f-navy" cx="11" cy="23" r="2"/></svg></button>
<button aria-label="Three point arc"><svg viewBox="0 0 32 32"><path class="sky" d="M16 8c12-2 14 12 8 15q-7 5-13-3"/><path d="M15 8l9 14-14-4"/><circle class="f-r dot" cx="15" cy="8" r="2"/><circle class="f-navy" cx="10" cy="18" r="2"/><circle class="f-navy" cx="25" cy="22" r="2"/></svg></button>
<button aria-label="Pie"><svg viewBox="0 0 32 32"><path class="f-pale sky" d="M9 8h16q-2 13-16 15z"/><path d="M9 8v15L25 9"/><circle class="f-r dot" cx="25" cy="9" r="2"/><circle class="f-navy" cx="9" cy="8" r="2"/><circle class="f-navy" cx="9" cy="23" r="2"/></svg></button>
<i></i>
<button aria-label="Move"><svg viewBox="0 0 32 32"><path class="f-r" d="M18 5l4 5h-3v4h-2v-4h-3zM18 27l4-5h-3v-4h-2v4h-3zM7 16l5-4v3h4v2h-4v3zM29 16l-5-4v3h-4v2h4v3z"/></svg></button>
<button aria-label="Push pull"><svg viewBox="0 0 32 32"><path class="f-pale sky" d="M6 19l10-5 11 4-8 8-13-5zM6 19l13 5 8-6M19 24v2"/><path class="f-r" d="M17 5l4 5h-2v8h-4v-8h-2z"/></svg></button>
<button aria-label="Rotate"><svg viewBox="0 0 32 32"><path class="r w15" d="M11 20q-2-8 6-10h6M25 13q2 9-7 10h-5"/><path class="f-r" d="M21 6l5 6-6 1zM10 20l6 1-3 6z"/></svg></button>
<button aria-label="Follow me"><svg viewBox="0 0 32 32"><path class="f-pale sky" d="M9 9q6-3 6 2l-2 5 5 5-5 4Q4 18 9 9z"/><path d="M15 7q7-2 9 5"/><circle class="f-r dot" cx="25" cy="11" r="2"/></svg></button>
<button aria-label="Scale"><svg viewBox="0 0 32 32"><path class="f-pale sky w2" d="M8 6h20v19H8z"/><path d="M8 12h14v13H8z"/><path class="f-r" d="M17 16l6-5-2-2h6v7l-2-2-5 5z"/></svg></button>
<button aria-label="Offset"><svg viewBox="0 0 32 32"><path class="sky" d="M8 8q9-4 13 1M27 14q1 8-4 11"/><path d="M9 15q7-4 12 3 1 6-4 7"/><path class="f-r" d="M18 13l5-4-2-2h6v6l-2-2-5 4z"/></svg></button>
<button aria-label="Axes"><svg viewBox="0 0 32 32"><path class="sky" d="M16 5v10"/><path class="r d" d="M9 11l16 10"/><path class="green d" d="M8 22l17-11"/><path class="f-sky" d="M13 9l3-5 3 5z"/><path class="f-r" d="M22 18l6 5-6 0z"/><path class="f-grn" d="M21 12l6-2-3 5z"/><circle class="f-navy" cx="16" cy="17" r="3"/></svg></button>
<button aria-label="Flip"><svg viewBox="0 0 32 32"><path d="M14 6v18H6z"/><path class="f-pale sky" d="M19 6v18h8z"/><path class="r d w2" d="M17 4v22"/></svg></button>
<i></i>
<button aria-label="Tape"><svg viewBox="0 0 32 32"><path class="f-pale" d="M12 10l10-4 4 11-5 6h-9z"/><path d="M13 20l-5 5 9 0"/><circle class="f-r" cx="18" cy="14" r="3"/></svg></button>
<button aria-label="Dimension"><svg viewBox="0 0 32 32"><path d="M11 17L22 8M8 14l7 7M18 6l7 7M16 21l-4-4M25 15l-4-4M10 10l4-4"/><circle class="f-r" cx="25" cy="16" r="3"/><circle class="f-r" cx="17" cy="23" r="3"/></svg></button>
<button aria-label="Protractor"><svg viewBox="0 0 32 32"><path class="f-pale w15" d="M11 25q-4-7 2-12t13-4q-2 12-15 16zM13 20q0-7 9-8"/></svg></button>
<button aria-label="Text"><svg viewBox="0 0 32 32"><path class="f-w" d="M11 6h17v14H11zM11 14H9v10M7 22l2 4 2-4"/><text class="a1" x="14" y="17">A1</text></svg></button>
<button aria-label="Section label"><svg viewBox="0 0 32 32"><circle cx="17" cy="16" r="8"/><path d="M7 16h20M15 12h4"/><path class="f-navy" d="M24 11l5 5-5 5z"/><text class="a2" x="13" y="22">A-B</text></svg></button>
<button aria-label="3D text"><svg viewBox="0 0 32 32"><text class="a3" x="9" y="25">A</text></svg></button>
<i></i>
<button aria-label="Orbit"><svg viewBox="0 0 32 32"><path class="r w2" d="M16 12q-9 0-8 4 1 3 8 4M19 12q9 0 8 4-1 3-7 4"/><path class="f-r" d="M12 17l4 3-4 4zM23 17l-4 3 4 4z"/><path d="M18 6v20"/></svg></button>
<button aria-label="Pan"><svg viewBox="0 0 32 32"><path class="r w2" d="M11 9h13"/><path class="f-r" d="M13 5l-5 4 5 4zM22 5l5 4-5 4z"/><path class="f-pale" d="M14 26l-5-8q1-2 4 2v-8q2-3 3 0v5l9 2-2 8z"/></svg></button>
<button aria-label="Zoom"><svg viewBox="0 0 32 32"><circle cx="21" cy="12" r="6"/><path class="w2" d="M16 17l-8 8"/></svg></button>
<button aria-label="Zoom window"><svg viewBox="0 0 32 32"><path class="sky d" d="M7 6h20v20H7z"/><circle cx="19" cy="13" r="5"/><path class="w2" d="M15 17l-6 7"/></svg></button>
<button aria-label="Zoom extents"><svg viewBox="0 0 32 32"><circle cx="18" cy="16" r="5"/><path class="w2" d="M14 20l-6 6"/><path class="f-r" d="M7 6h6l-2 2 4 4-2 1-4-4-2 2zM28 6h-6l2 2-3 3 2 1 3-3 2 2zM28 26h-6l2-2-3-3 2-1 3 3 2-2z"/></svg></button>
<button aria-label="Previous"><svg viewBox="0 0 32 32"><path d="M18 20H9V10h4l2-2h5l2 2h3v3"/><path class="r" d="M17 14h7q6 5 0 10h-4"/><path class="f-r" d="M16 14l5-4v7z"/></svg></button>
<i></i>
<button aria-label="Position camera"><svg viewBox="0 0 32 32"><path class="f-w" d="M11 9h3l2-3h4l2 3h2v8H11z"/><path d="M14 18l-3 8M22 18l3 8M16 18v8M20 18v8"/><circle class="f-r" cx="18" cy="13" r="3"/></svg></button>
<button aria-label="Walk"><svg viewBox="0 0 32 32"><circle class="f-navy" cx="17" cy="6" r="2"/><path class="w2" d="M17 9v8l4 9M16 17l-4 9M17 11l5 3"/><path class="w3" d="M17 10v8"/><path class="r w2" d="M14 10v7"/><path class="sky" d="M24 11v15"/></svg></button>
<button aria-label="Look around"><svg viewBox="0 0 32 32"><path class="w2" d="M7 11q12-5 21 4-9 13-18 3 5-4 15-3M9 8l2 3M14 7l2 3"/><circle class="f-sky" cx="20" cy="17" r="4"/></svg></button>
<button aria-label="Field of view"><svg viewBox="0 0 32 32"><path d="M24 7L5 16l19 9"/><path class="sky w2" d="M17 11q3 6 0 10M23 8q3 8 0 16"/></svg></button>
<i></i>
<button aria-label="Warehouse"><svg class="blue" viewBox="0 0 32 32"><path class="w2" d="M20 27l-3 1-9-5V11l9-6 10 5v9M13 12l5-3 6 3v7l-6 4-6-3zM18 14l2 1v2l-2 2"/><path class="f-w" d="M24 18h4v6h2l-4 5-5-5h3z"/></svg></button>
<button aria-label="Extension sync"><svg class="blue" viewBox="0 0 32 32"><path class="w3" d="M7 7q10 8 20 0M7 13q10 6 20 0M7 21q5-4 10-4M7 27q5-4 9-4"/><circle class="f-w" cx="24" cy="22" r="6"/><path d="M21 21q2-3 5 0M27 23q-3 3-5 0"/></svg></button>
<button aria-label="Layer export"><svg class="blue" viewBox="0 0 32 32"><path class="w2" d="M9 10l9-5 9 4-9 5zM9 14l9 5 9-4M9 18l9 6 4-2M9 22l9 5"/><path class="f-w" d="M22 19h5v-3l6 5-6 5v-3h-5z"/></svg></button>
<button aria-label="Extension settings"><svg class="blue" viewBox="0 0 32 32"><path class="w3" d="M7 7q10 8 20 0M7 13q10 6 20 0M7 21q5-4 10-4M7 27q5-4 9-4"/><circle class="f-w gear" cx="24" cy="22" r="5"/><circle class="f-w" cx="24" cy="22" r="2"/></svg></button>
</div>
</aside>

<section class="canvas">
<p class="view">Right</p>
<svg class="model" viewBox="280 460 1400 180">
<defs><linearGradient id="edge"><stop offset="0" stop-color="#ddd"/><stop offset="1" stop-color="#fff"/></linearGradient><linearGradient id="edge2"><stop offset="0" stop-color="#fff"/><stop offset="1" stop-color="#ddd"/></linearGradient></defs>
<path class="dark" d="M290 487L340 484H1625L1669 488 1592 494H371z"/>
<path class="dark" d="M308 612L371 604.500H1512V614H340z"/>
<path class="face" d="M290 487V474Q310 471 340 471H1625Q1660 472 1669 474V486Q1650 484 1620 484H330Q300 485 290 487z"/>
<path class="e1" d="M290 475h12v11h-12z"/><path class="e2" d="M1658 475h11v11h-11z"/>
<path class="thin" d="M290 487V474Q310 471 340 471M1625 471Q1660 472 1669 474V488L1592 494.500M290 487L371 494.500M290 487Q305 484 340 484M1669 487Q1650 484 1625 484"/>
<path class="pale" d="M325 471H1635M325 483.500H1635"/>
<path class="thin" d="M371.500 494V573M371.500 589V605M1587.500 494V594"/>
<path class="face" d="M308 612Q330 614 360 614H1610Q1640 614 1652 612V625Q1630 627 1590 627H350Q315 627 308 624z"/>
<path class="e1" d="M308 613h12v12h-12z"/><path class="e2" d="M1641 600h11v25h-11z"/>
<path class="thin" d="M371 605L308 612V624Q315 627 350 627M1652 612V624.500Q1640 627 1590 627M1652 612Q1630 614 1590 614"/>
<path class="med" d="M340 614.500H1600M350 627H1600M371 604.500H1512"/>
<path class="dark" d="M320 574L371 571.500H404V574.500z"/>
<path class="thin" d="M434 575.500H307V588M307 575L371 572.500H404"/><path class="pale" d="M307 588.500H434"/>
<path class="e1" d="M307 576h8v12h-8z"/>
<path class="face" d="M1525 601H1652V612.500L1600 614H1525z"/><path class="e2" d="M1641 600h11v12h-11z"/>
<path class="dark" d="M1554 594H1588L1652 598.500 1610 600 1554 599.500z"/>
<path class="thin" d="M1587 594L1652 599V612.500L1595 614M1554 599.500L1611 598 1652 598.500M1575 594L1611 598"/><path class="teal" d="M1525 601H1610M1554 600V594H1587"/>
<g class="dark">
<path d="M447 484.500L524 494V501H457.500V593.500H524V604.500L450 614H447z"/>
<path d="M785 501L795 503.500V590.500L785 593.500z"/>
<path d="M808 484.500L832.500 494V501H818.500V593.500H832.500V604.500L808 614z"/>
<path d="M1151 484.500L1126 494V501H1140.500V593.500H1126V604.500L1151 614z"/>
<path d="M1174 501L1163 503.500V590.500L1174 593.500z"/>
<path d="M1512 484.500L1435.500 494V501H1502V593.500H1435.500V604.500L1512 614z"/>
</g>
<path class="thin" d="M448 484.500L524 494.500M450 614L524 604.500M808 484.500L832 494M808 614L832 604.500M1151 484.500L1126 494M1151 614L1126 604.500M1512 484.500L1436 494M1512 614L1436 604.500M457.500 593.500V501H524M470.500 501V593.500M457.500 593.500H524M1488.500 501V593.500M1501.500 501V593.500H1436M1436 501H1502M785 501L795 503.500M785 593.500L795 590.500M1174 501L1163 503.500M1174 593.500L1163 590.500"/>
<path class="med" d="M524 593.500H785M832 593.500H1126M1174 593.500H1436M771.500 501V593M831.500 501V593M1127.500 501V593"/>
<path class="pale" d="M524 501H785M832 501H1126M1174 501H1436M1187 501V593"/>
<path class="plum" d="M524.500 494V501M524.500 594V605M832.500 494V501M832.500 594V605M1125.500 494V501M1125.500 594V605M1435.500 494V501M1435.500 594V605"/>
<g class="post"><path d="M434.500 484.500h12v129h-12zM795.500 484.500h12v129h-12zM1151.500 484.500h12v129h-12zM1512.500 484.500h12v129h-12z"/></g>
</svg>
<div class="options">
<label class="check"><input type="checkbox">Nhìn xuyên (nhấn ~)</label>
<div class="slide"><input type="range" min="3" max="50" value="3" aria-label="Số lượng"><output>3</output></div>
<button class="edge sel"><i class="c1"></i>NEP CÓ VAN - 1mm</button>
<button class="edge"><i class="c2"></i>nep 34 - 1mm</button>
<button class="edge"><i class="c3"></i>CHỈ - 1.5mm</button>
</div>
<div class="modes">
<button aria-label="Solid"><i></i></button><button aria-label="Dashed"><i class="dashed"></i></button><button aria-label="Red"><i class="red"></i></button>
<button class="cog" aria-label="Options"><svg viewBox="0 0 16 16"><circle class="teeth" cx="8" cy="8" r="6"/><circle class="ring" cx="8" cy="8" r="4"/></svg></button>
</div>
<div class="win key">
<div class="cap"><b>Keyframe Animation</b><button aria-label="Close">x</button></div>
<div class="row">
<button aria-label="Play"><svg viewBox="0 0 24 24"><path class="f-play" d="M2 0l20 12L2 24z"/></svg></button>
<button aria-label="Record"><svg viewBox="0 0 24 24"><circle class="rec" cx="12" cy="12" r="11"/><circle class="f-gray" cx="12" cy="12" r="5"/></svg></button>
<button aria-label="Region"><svg viewBox="0 0 24 24"><path class="region" d="M2 2h20v20H2z"/><path class="f-gray" d="M0 0h4v4H0zM20 0h4v4h-4zM0 20h4v4H0zM20 20h4v4h-4z"/></svg></button>
<button aria-label="Cancel"><svg viewBox="0 0 24 24"><circle class="f-gray" cx="12" cy="12" r="11"/><path class="wl" d="M8 8l8 8M16 8l-8 8"/></svg></button>
<button aria-label="Timer"><svg viewBox="0 0 24 24"><circle class="tm" cx="12" cy="14" r="9"/><path class="tm" d="M8 1h8M12 2v4M19 5l3 3M11 15l4-4"/></svg></button>
<button aria-label="Film"><svg viewBox="0 0 24 24"><path class="f-film" d="M0 0l24 2v22L0 22z"/><path class="f-cy" d="M0 4l24 1v14L0 18z"/><path class="k" d="M9 4v14M17 5v14"/><path class="wd" d="M1 2l22 1M1 20l22 2"/></svg></button>
<button aria-label="Help"><svg viewBox="0 0 24 24"><circle class="hp" cx="12" cy="12" r="11"/><circle class="f-hb" cx="12" cy="12" r="8"/><text class="q" x="8" y="17">?</text></svg></button>
</div></div>
<div class="win w1"><div class="cap"><b>...</b><button aria-label="Close">×</button></div><div class="row"><button aria-label="Face"><svg viewBox="0 0 24 24"><path class="quad" d="M0 7l13-6 10 22H0z"/></svg></button></div></div>
<div class="win w2n"><div class="cap"><b>...</b><button aria-label="Close">×</button></div><div class="row"><button aria-label="Nodes"><svg class="navy" viewBox="0 0 24 24"><circle class="w2" cx="9" cy="12" r="8"/><path class="f-navy" d="M2 0l5 3-5 2zM2 20l5 2-5 3zM19 9l5 3-5 3z"/></svg></button></div></div>
<div class="win w3n"><div class="cap"><b>...</b><button aria-label="Close">×</button></div><div class="row"></div></div>
<p class="clip">v</p>
</section>
</main>
</body>
</html>
```
FILE: styles.css
```css
*{box-sizing:border-box}
body{margin:0;height:100vh;display:flex;flex-direction:column;overflow:hidden;background:#f1f0f5;color:#222;font:12px "Open Sans","Noto Sans",sans-serif}
button{border:0;padding:0;margin:0;background:none;color:inherit;font:inherit;flex:none}
h1,p{margin:0}
i{flex:none;font-style:normal}
.titlebar{height:23px;flex:none;background:#fff;display:flex;align-items:center;gap:5px;padding-left:2px}
.titlebar h1{font:11px "Noto Sans",sans-serif;color:#000}
.logo{width:16px;height:16px;fill:none;stroke:#1b78ad;stroke-width:1.500}
.menu{height:23px;flex:none;display:flex;align-items:center;gap:14px;padding-left:10px;border-bottom:2px solid #dcdce4;color:#333}
.bar{height:36px;flex:none;display:flex;border-bottom:2px solid #dfdfe8;overflow:hidden}
.second{margin-left:40px;border-left:1px solid #dfdfe8;height:35px}
.group{display:flex;align-items:center;flex:none;padding:0 3px 0 2px;border-right:2px solid #dfdfe8}
.first .group{padding:0 1px 0 4px}
.grip{width:5px;height:17px;margin-right:2px;background:radial-gradient(circle at 1px 1px,#bbb 1px,transparent 1px) 0 0/3px 3px}
.group button{width:32px;height:32px;display:grid;place-items:center}
.group .on{border:1px solid #2f86c6;border-radius:4px;background:#dcebf8}
.sep{width:6px;height:20px;background:linear-gradient(#999,#999) 2px 0/2px 100% no-repeat}
svg{fill:none;stroke:#111;stroke-width:1;display:block;overflow:visible}
.group svg,.tools svg{width:32px;height:32px;flex:none}
.group.small svg{width:24px;height:24px}
.group .on svg{margin:-1px}
.navy svg,svg.navy,.tools svg{stroke:#1a4673}
.gray svg,.navy svg.gray,.gray{stroke:#8a8a8f}
svg.mid,.mid{stroke:#666}
.w15{stroke-width:1.500}.w2{stroke-width:2}.w3,.big{stroke-width:3}
.r{stroke:#f11}.b{stroke:#24e}.k{stroke:#111}.b2{stroke:#00f;stroke-width:2}.lg{stroke:#aaa}
.dash{stroke-dasharray:2 2}.d{stroke-dasharray:2 1}
.f-w{fill:#fff}.f-k{fill:#000}.f-r{fill:#f01414}.small .f-r{fill:#e22}.tools .f-r{stroke:none}
.tools .dot{stroke:#f11}
.f-g{fill:#888;stroke:#777}.f-dg{fill:#777;stroke:none}.f-lg{fill:#ccc;stroke:#999}.f-lg.k{stroke:#111}.nos{stroke:none}
.f-l{fill:#cacaca}.f-ll{fill:#e5e5e5}.f-gray{fill:#919191;stroke:none}.f-navy{fill:#153f68;stroke:none}
.f-o{fill:#f63}.f-gr{fill:#8b9}.f-y{fill:#db7}.f-p{fill:#bce}.f-c{fill:#5de}.f-cl{fill:#bde}.f-n{fill:#223}
.lt{stroke:#ddd;stroke-width:2}.lt1{stroke:#abd}.gr1{stroke:#999}
.posts,.louv{stroke-width:4}.posts.in,.louv.in{stroke:#e4e4e4;stroke-width:2}
.pipe{stroke-width:6}.p2{stroke:#daa8cd;stroke-width:4}
.gw{stroke:#666;stroke-width:4}.gw.in{stroke:#aaa;stroke-width:2}
svg text{stroke:none;fill:#111;font-family:"Open Sans",sans-serif}
svg .ab{font:18px Inter,sans-serif}
svg .dxf{font:bold 12px Inter,sans-serif}
svg .abf{font:bold 13px Roboto,sans-serif;fill:#f00}
svg .cz{font:italic bold 24px "Liberation Serif",serif;fill:#11169b}
svg .s{font:bold 9px Roboto,sans-serif;fill:#f00}
.rose{stroke:#c0605f;stroke-width:3}.rose.t{stroke-width:2}.rosy{stroke:#c0605f}.f-rose{fill:#c0595b;stroke:none}
.wl{stroke:#fff;stroke-width:3}
.teeth{stroke:#000;stroke-width:5;stroke-dasharray:5 3.640}.ring{stroke:#000;stroke-width:5}
.cog .teeth{stroke-width:3;stroke-dasharray:2.500 2.212}.cog .ring{stroke-width:2}
.f-bl{fill:#1684bb;stroke:#124}.f-m{fill:#f0b;stroke:none}
.f-skin{fill:#edc0ae}.salmon{stroke:#e66;stroke-width:1.500}.f-grn{fill:#296}.f-yel{fill:#fb0}.green{stroke:#159b25;stroke-width:1.500}
.f-d{fill:#444;stroke:none}.gap{stroke:#f1f0f5;stroke-width:5}.redl{stroke:#d9423c;stroke-width:2}.redc{fill:#fff;stroke:#d9423c;stroke-width:1.500}
.f-gold{fill:#efb71b}.f-lav{fill:#bfccff}.f-sage{fill:#c3dba6}.f-tan{fill:#e6bf91}.f-br{fill:#8b765b}
.solids svg{stroke:#6a5a3c}
.f-cr{fill:#f3efd8}.f-blue{fill:#78aeff;stroke:#052e7d}.f-blue2{fill:#075cff;stroke:none}
.f-lime{fill:#9d3}.f-org{fill:#b73}
.tag{position:relative;width:166px;height:23px;border:1px solid #c4c4cc;border-radius:3px;background:#fff;display:flex;align-items:center;padding-left:6px}
.group .tick{width:14px;height:12px;stroke-width:2}
select{appearance:none;border:0;flex:1;height:20px;padding:0 0 0 4px;color:#333;font:12px "Open Sans",sans-serif;background:none}
.tag::after{content:"";position:absolute;right:7px;border:4px solid transparent;border-top:5px solid #777;border-bottom:0}
.work{flex:1;min-height:0;display:flex}
.palette{width:69px;flex:none;align-self:flex-start;border:solid #dfdfe8;border-width:0 2px 2px 1px}
.hgrip{display:block;width:17px;height:5px;margin:5px auto 2px;background:radial-gradient(circle at 1px 1px,#bbb 1px,transparent 1px) 0 0/3px 3px}
.tools{display:grid;grid-template-columns:32px 32px}
.tools button{height:32px}
.tools>i{grid-column:1/3;height:6px;margin:0 6px 0 7px;background:linear-gradient(#999,#999) 0 2px/100% 2px no-repeat}
.tools .sky{stroke:#2b9fd6;stroke-width:1.500}.f-sky{fill:#1a9bd9;stroke:none}.f-pale{fill:#dcebf8}
.tools svg.blue{stroke:#1464a5}.gear{stroke-dasharray:2 1;stroke-width:2}
svg .a1{font:bold 9px "Liberation Serif",serif;fill:#1a4673}svg .a2{font:5px Roboto,sans-serif;fill:#1a4673}svg .a3{font:italic bold 23px "Open Sans",sans-serif;fill:#4db8e4;stroke:#17659b}
.canvas{position:relative;flex:1;background:#fff;overflow:hidden}
.view{position:absolute;left:2px;top:0;font:11px/14px "DejaVu Sans Condensed","DejaVu Sans",sans-serif;color:#000}
.model{position:absolute;left:211px;top:344px;width:1400px;height:180px}
.dark{fill:#666;stroke:none}.face{fill:#fff;stroke:none}.e1{fill:url(#edge);stroke:none}.e2{fill:url(#edge2);stroke:none}
.thin{stroke:#000}.pale{stroke:#bbb;stroke-width:2}.med{stroke:#8c8c8c}.teal{stroke:#84939a}.plum{stroke:#a35b99}
.post{fill:#d884c9;stroke:#4b3448}
.options{position:absolute;left:28px;top:23px;display:flex;flex-direction:column;align-items:flex-start;color:#6d6a5d;font:10px/14px "DejaVu Sans",sans-serif}
.check{display:flex;align-items:center;gap:9px;font-weight:bold;font-family:"DejaVu Sans Condensed","DejaVu Sans",sans-serif}
.check input{appearance:none;width:14px;height:14px;margin:0;border:1px solid #666;border-radius:2px;background:#fff}
.slide{position:relative;width:158px;height:16px;margin:21px 0 3px}
.slide input{appearance:none;width:100%;height:16px;margin:0;display:block;background:linear-gradient(#e1e1e1,#e1e1e1) 0 7px/100% 2px no-repeat}
.slide input::-webkit-slider-thumb{appearance:none;width:16px;height:16px;border:1px solid #888;background:#eee}
.slide output{position:absolute;left:0;top:0;width:16px;text-align:center;line-height:16px;pointer-events:none}
.edge{height:25px;display:flex;align-items:center;color:#6d6a5d;font:10px "DejaVu Sans Condensed","DejaVu Sans",sans-serif}
.edge i{width:38px;height:14px;margin:0 8px 0 4px}
.edge.sel{color:#000;font-weight:bold}
.edge.sel i{width:40px;height:16px;margin-left:2px}
.c1{background:#ec1c54}.c2{background:#c5d8c2}.c3{background:#f9a6bb}
.modes{position:absolute;left:690px;top:15px;display:flex;gap:80px}
.modes button{width:80px;height:30px;background:#ebebeb;display:grid;place-items:center}
.modes i{width:24px;height:18px;border:1px solid #000;background:#fff}
.modes .dashed{border:1px dashed #999}.modes .red{width:19px;border-color:#b00}
.modes .cog{width:31px;border-radius:3px}.cog svg{width:14px;height:14px}
.win{position:absolute;border:1px solid #dfdfe8;background:#f1f0f5;padding:2px}
.cap{height:20px;display:flex;align-items:center;justify-content:space-between;padding:0 4px 0 2px;border:1px solid #b4b6bc;background:#9cb5d2;color:#444}
.cap button{height:16px;line-height:12px;font-size:12px}
.win .row{display:flex;align-items:center;justify-content:space-between;height:33px;padding:1px 4px 0 3px}
.win svg{width:24px;height:24px}
.key{left:558px;top:45px;width:229px}
.w1{left:1345px;top:107px;width:37px}.w2n{left:1424px;top:181px;width:37px}.w3n{left:1479px;top:792px;width:37px}
.f-play{fill:#3779e8;stroke:#2458b8}.rec{fill:#fff;stroke:#999;stroke-width:2}.region{stroke:#999;stroke-width:2;stroke-dasharray:4 3}
.tm{stroke:#3a50b8;stroke-width:3}.f-film{fill:#222}.f-cy{fill:#1792cc}.wd{stroke:#fff;stroke-width:2;stroke-dasharray:2 2}
.hp{fill:#fff;stroke:#aaa}.f-hb{fill:#1670cb;stroke:none}svg .q{font:bold 14px "Open Sans",sans-serif;fill:#fff}
.win .wl{stroke-width:2}.quad{fill:#b9b8bd;stroke:#999}
.clip{position:absolute;left:calc(100% - 6px);top:22px;font:bold 9px/14px "DejaVu Sans Condensed","DejaVu Sans",sans-serif;color:#000}
```
